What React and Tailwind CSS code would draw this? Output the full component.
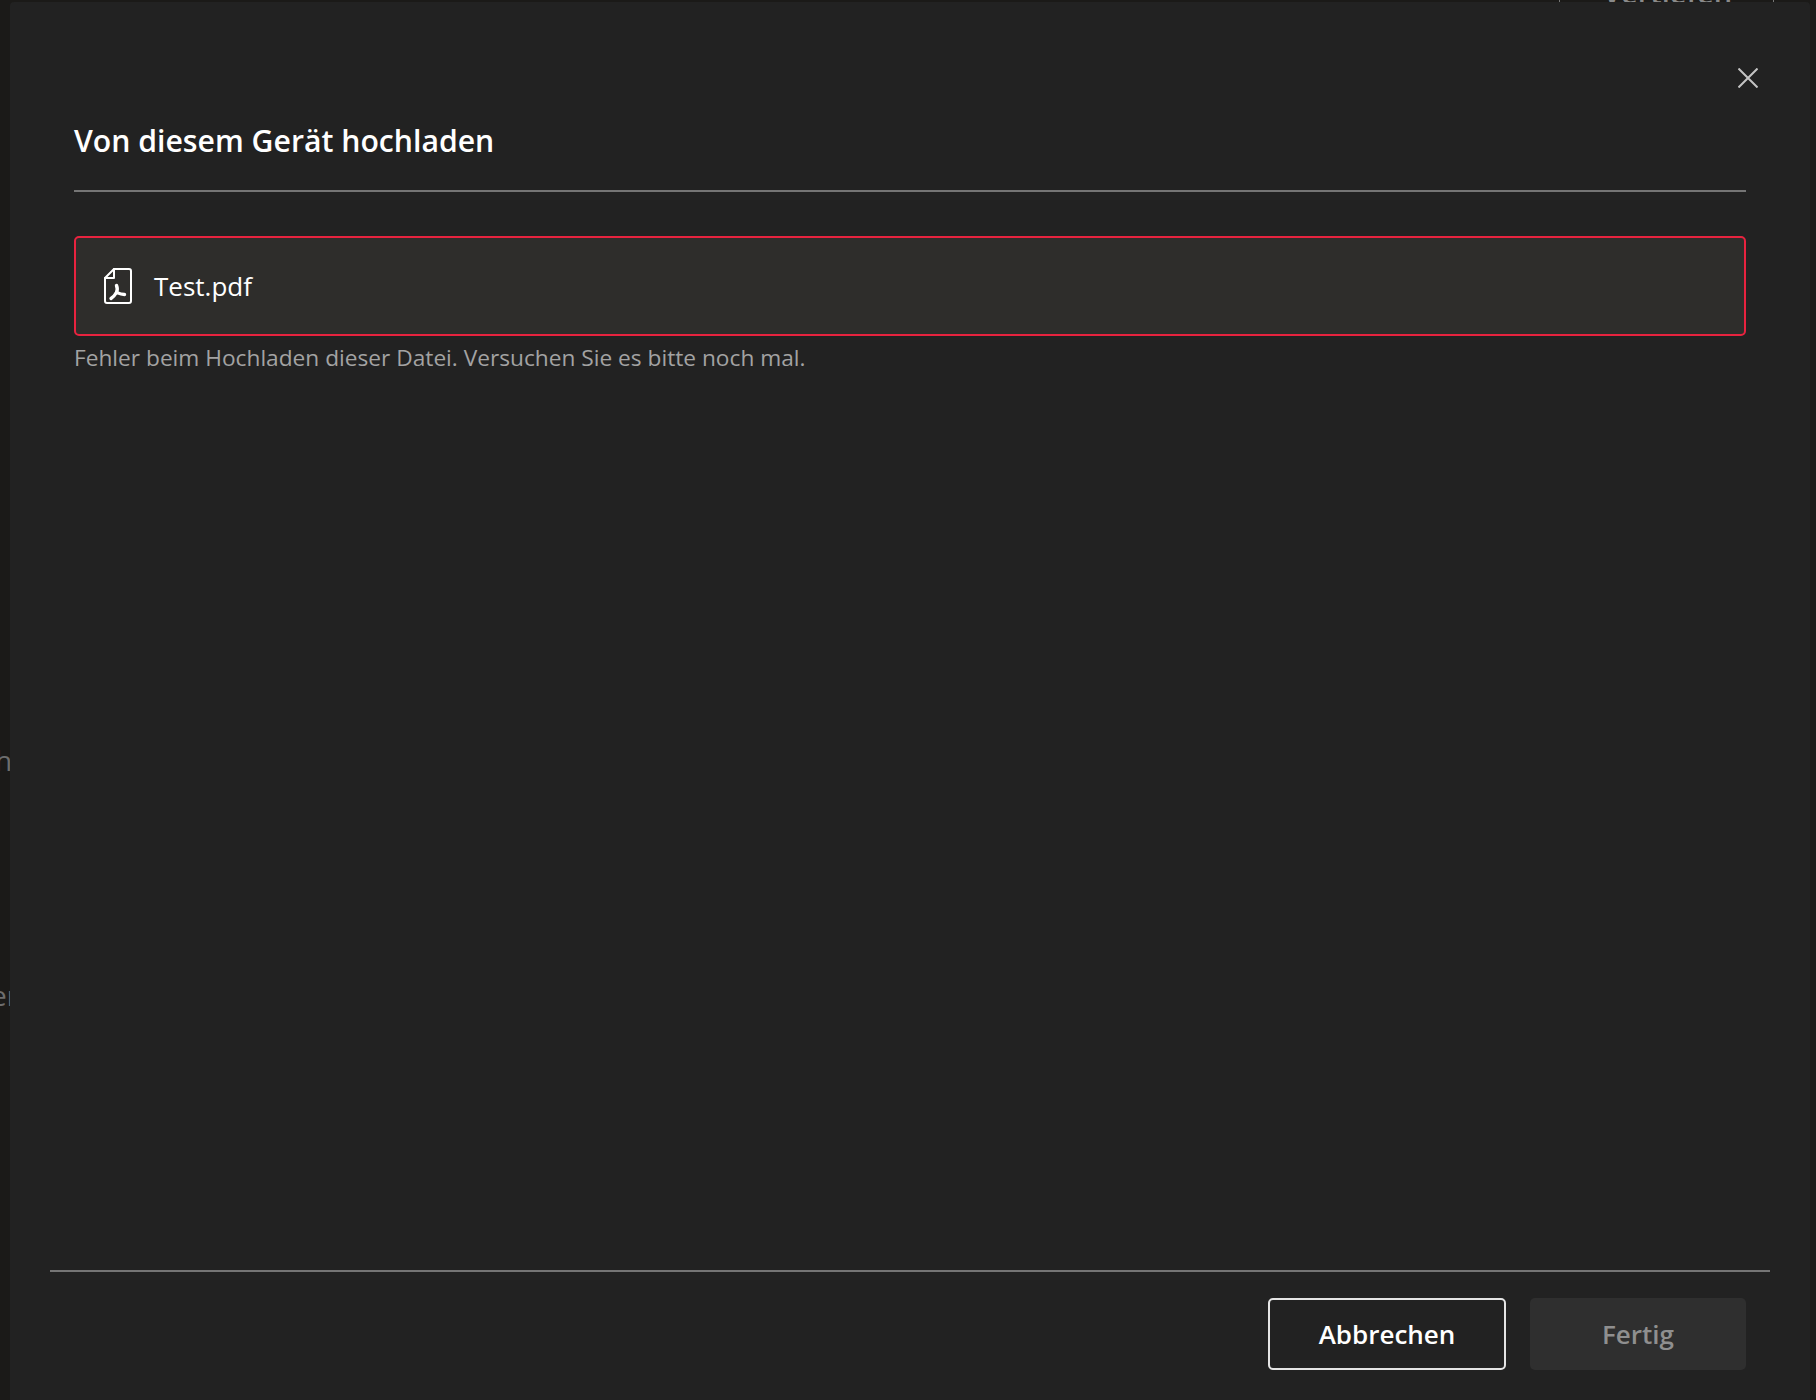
function PdfIcon() {
  return (
    <svg width="28" height="36" viewBox="0 0 28 36" fill="none" stroke="#ffffff" strokeWidth="2" strokeLinejoin="round" strokeLinecap="round">
      <path d="M10 1H25C26.1 1 27 1.9 27 3V33C27 34.1 26.1 35 25 35H3C1.9 35 1 34.1 1 33V10L10 1Z" />
      <path d="M10 1V10H1" />
      <path d="M12.5 17.5C13.5 20 13.5 22.5 12.5 24.5" strokeWidth="3.4" />
      <path d="M12.5 24.5C11 27 9.5 29 7 30.5" strokeWidth="3.4" />
      <path d="M12.5 24.5C15 25.5 17.5 26.5 20.5 26.5" strokeWidth="3.4" />
    </svg>
  );
}

export default function App() {
  return (
    <div className="w-[1816px] h-[1400px] overflow-hidden relative bg-[#1b1a18] font-['Open_Sans',sans-serif]">
      {/* bits of the page behind the dialog */}
      <div className="absolute top-[-21px] left-[1603px] text-[29px] leading-[28px] font-semibold text-[#8a8a8a]">Vertiefen</div>
      <div className="absolute top-0 left-[1559px] w-px h-[2px] bg-[#777777]" />
      <div className="absolute top-0 left-[1773px] w-px h-[2px] bg-[#777777]" />
      <div className="absolute top-[739px] left-[-5px] text-[28px] text-[#6e6e6e]">h</div>
      <div className="absolute top-[974px] left-[-9px] text-[28px] text-[#6e6e6e]">er</div>

      <div className="absolute left-[10px] top-[2px] w-[1800px] h-[1398px] bg-[#222222] rounded-t-[4px] flex flex-col">
        <div className="flex justify-end pt-[66px] pr-[52px]">
          <svg width="20" height="20" viewBox="0 0 20 20" stroke="#c4c4c4" strokeWidth="2" fill="none">
            <path d="M0.5 0.5L19.5 19.5M19.5 0.5L0.5 19.5" />
          </svg>
        </div>
        <div className="px-[64px] pt-[33px]">
          <h1 className="text-[30.2px] leading-[40px] font-semibold text-white">Von diesem Gerät hochladen</h1>
          <div className="mt-[29px] h-[2px] bg-[#757575]" />
          <div className="mt-[44px] h-[100px] bg-[#2e2d2b] border-2 border-[#e8233f] rounded-[5px] flex items-center pl-[28px] gap-[22px]">
            <PdfIcon />
            <span className="text-[26px] text-white">Test.pdf</span>
          </div>
          <p className="mt-[6px] text-[22.7px] leading-[32px] text-[#a3a3a3]">Fehler beim Hochladen dieser Datei. Versuchen Sie es bitte noch mal.</p>
        </div>
        <div className="mt-auto mx-[40px] h-[2px] bg-[#757575]" />
        <div className="flex justify-end gap-[24px] pt-[26px] pb-[30px] pr-[64px]">
          <button className="w-[238px] h-[72px] rounded-[5px] border-2 border-[#e5e5e5] text-[26px] font-semibold text-white">Abbrechen</button>
          <button className="w-[216px] h-[72px] rounded-[5px] bg-[#2f2f2f] text-[26px] font-semibold text-[#8f8f8f]">Fertig</button>
        </div>
      </div>
    </div>
  );
}
